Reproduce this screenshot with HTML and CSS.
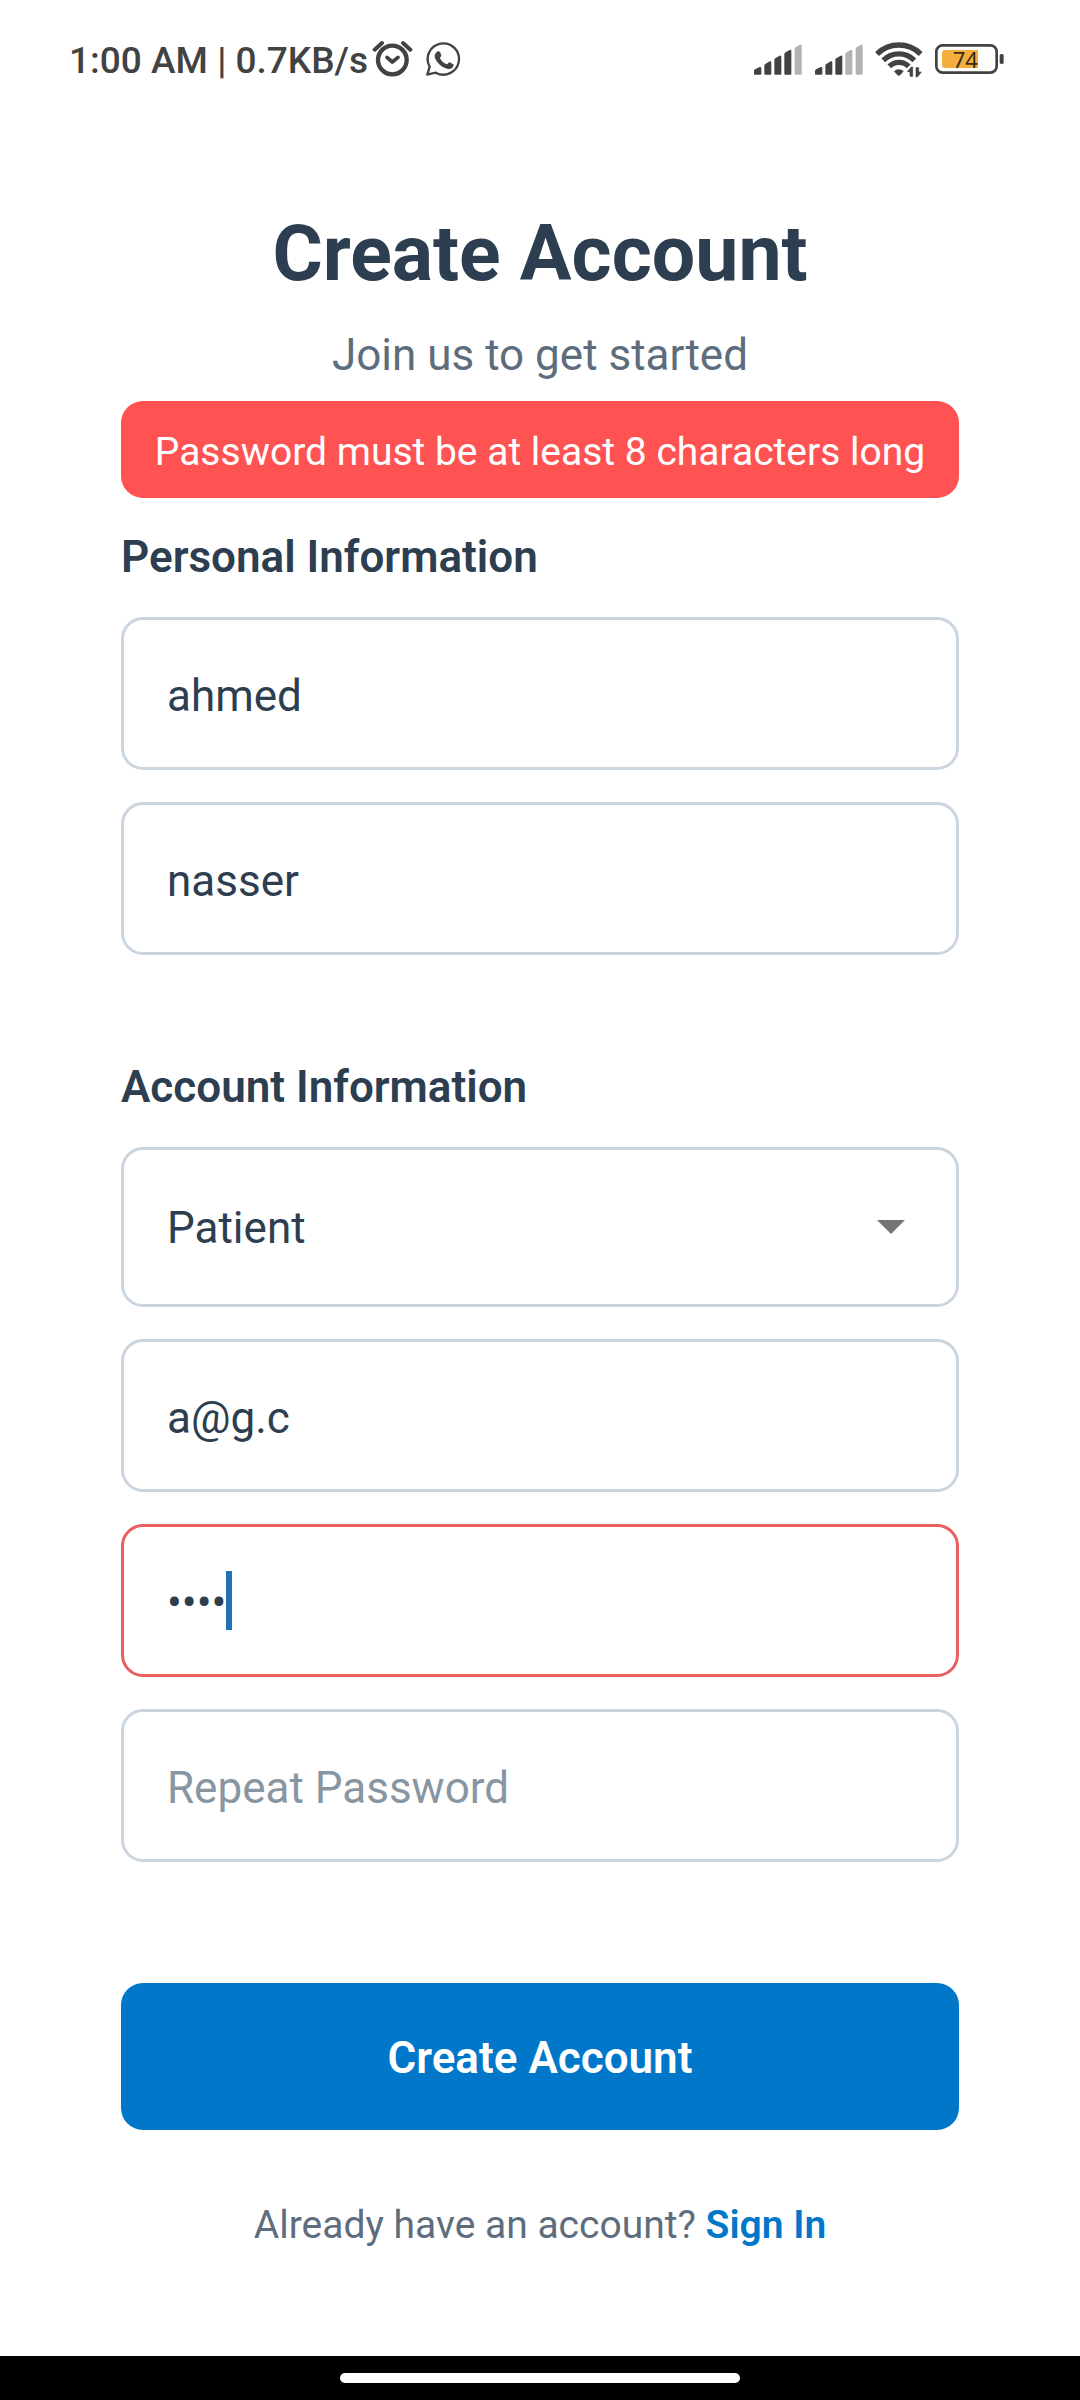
FILE: index.html
```html
<!DOCTYPE html>
<html lang="en">
<head>
  <meta charset="utf-8">
  <meta name="viewport" content="width=device-width, initial-scale=1">
  <title>Create Account</title>
  <link rel="stylesheet" href="styles.css">
</head>
<body>
  <div class="screen">
    <header class="status">
      <div class="status-left">
        <span class="status-text">1:00 AM | 0.7KB/s</span>
        <svg class="icon-alarm" viewBox="966 60 123 114" aria-hidden="true">
          <circle cx="1027" cy="120" r="43" fill="none" stroke="#424242" stroke-width="13"/>
          <path d="M974 89l22-20M1081 89l-22-20" fill="none" stroke="#424242" stroke-width="12" stroke-linecap="round"/>
          <path d="M1011 112l16 14 17-14" fill="none" stroke="#424242" stroke-width="11" stroke-linecap="round" stroke-linejoin="round"/>
        </svg>
        <svg class="icon-chat" viewBox="1128 60 108 114" aria-hidden="true">
          <path d="M1135 164l7-24a47 47 0 1 1 18 18z" fill="none" stroke="#424242" stroke-width="7" stroke-linejoin="round"/>
          <path d="M1164 95c3-2 7-2 9 1l4 10c1 3-5 7-4 9 5 9 11 14 20 18 3 1 6-7 9-6l11 6c2 2 0 8-3 10-6 5-13 5-20 2-15-6-24-15-31-28-4-8-2-17 5-22z" fill="#424242"/>
        </svg>
      </div>
      <div class="status-right">
        <svg class="icon-signal" viewBox="67 69 150 99" aria-hidden="true">
          <g fill="#424242">
            <path d="M70 153q0-3 3-5l14-7q5-1 5 4v16q0 3-3 3H73q-3 0-3-3z"/>
            <path d="M101 137q0-4 4-6l12-7q5-2 5 3v34q0 3-3 3h-15q-3 0-3-3z"/>
            <path d="M131 120q0-4 4-6l12-7q5-2 5 3v51q0 3-3 3h-15q-3 0-3-3z"/>
            <path d="M161 103q0-4 4-6l12-7q5-2 5 3v68q0 3-3 3h-15q-3 0-3-3z"/>
          </g>
          <path d="M192 87q0-4 4-6l12-7q5-2 5 3v84q0 3-3 3h-15q-3 0-3-3z" fill="#b3b3b3"/>
        </svg>
        <svg class="icon-signal" viewBox="67 69 150 99" aria-hidden="true">
          <g fill="#424242">
            <path d="M70 153q0-3 3-5l14-7q5-1 5 4v16q0 3-3 3H73q-3 0-3-3z"/>
            <path d="M101 137q0-4 4-6l12-7q5-2 5 3v34q0 3-3 3h-15q-3 0-3-3z"/>
            <path d="M131 120q0-4 4-6l12-7q5-2 5 3v51q0 3-3 3h-15q-3 0-3-3z"/>
          </g>
          <g fill="#b3b3b3">
            <path d="M161 103q0-4 4-6l12-7q5-2 5 3v68q0 3-3 3h-15q-3 0-3-3z"/>
            <path d="M192 87q0-4 4-6l12-7q5-2 5 3v84q0 3-3 3h-15q-3 0-3-3z"/>
          </g>
        </svg>
        <svg class="icon-wifi" viewBox="429 60 144 114" aria-hidden="true">
          <g fill="none" stroke="#424242" stroke-width="16">
            <path d="M435 102a93 93 0 0 1 131 0"/>
            <path d="M454 121a66 66 0 0 1 93 0"/>
            <path d="M472 139a41 41 0 0 1 58 0"/>
          </g>
          <path d="M486 154q14-13 29 0l-10 11q-4 4-9 0z" fill="#424242"/>
          <path d="M526 155l12-14h4v28h-8v-14zM568 156l-12 15h-4v-28h8v13z" fill="#424242" stroke="#424242" stroke-width="2"/>
        </svg>
        <svg class="icon-battery" viewBox="612 60 213 114" role="img" aria-label="Battery 74 percent">
          <rect x="619" y="76" width="181" height="82" rx="19" fill="none" stroke="#424242" stroke-width="8"/>
          <rect x="809" y="102" width="12" height="30" rx="5" fill="#424242"/>
          <path d="M646 90h98v54h-98q-10 0-10-10v-34q0-10 10-10z" fill="#f4ae3d"/>
          <text x="668" y="143" class="battery-text">74</text>
        </svg>
      </div>
    </header>

    <main class="content">
      <h1 class="title">Create Account</h1>
      <p class="subtitle">Join us to get started</p>
      <p class="alert" role="alert">Password must be at least 8 characters long</p>

      <form class="form">
        <section class="group">
          <h2 class="group-title">Personal Information</h2>
          <input class="field" type="text" aria-label="First Name" value="ahmed">
          <input class="field" type="text" aria-label="Last Name" value="nasser">
        </section>

        <section class="group">
          <h2 class="group-title">Account Information</h2>
          <div class="field-wrap">
            <select class="field field-select" aria-label="Account type">
              <option selected>Patient</option>
              <option>Doctor</option>
            </select>
            <svg class="arrow" viewBox="0 0 28 14" aria-hidden="true"><path d="M0 0h28L14 14z" fill="#757575"/></svg>
          </div>
          <input class="field" type="text" inputmode="email" aria-label="Email" value="a@g.c">
          <div class="field-wrap">
            <input class="field field-error" type="password" aria-label="Password" aria-invalid="true" value="1234">
            <span class="caret"></span>
          </div>
          <input class="field" type="password" aria-label="Repeat Password" placeholder="Repeat Password">
        </section>

        <button class="submit" type="submit">Create Account</button>
      </form>

      <p class="signin">Already have an account? <a class="signin-link" href="#">Sign In</a></p>
    </main>

    <footer class="navbar"><span class="nav-pill"></span></footer>
  </div>
</body>
</html>
```

FILE: styles.css
```css
* {
  box-sizing: border-box;
}

body {
  margin: 0;
  background: #fff;
  color: #2c3e50;
  font-family: Roboto, "Liberation Sans", sans-serif;
}

h1, h2, p {
  margin: 0;
}

.screen {
  display: flex;
  flex-direction: column;
  min-height: 100vh;
}

/* Status bar */
.status {
  display: flex;
  justify-content: space-between;
  align-items: center;
  height: 118px;
  padding: 0 75px 0 69px;
}

.status-left,
.status-right {
  display: flex;
  align-items: center;
}

.status-left {
  gap: 4px;
}

.status-right {
  gap: 11px;
}

.status-text {
  padding-top: 3px;
  color: #424242;
  font-size: 37px;
  line-height: 44px;
  font-weight: 500;
  white-space: nowrap;
}

.icon-alarm {
  width: 41px;
  height: 38px;
}

.icon-chat {
  width: 36px;
  height: 38px;
  margin-left: 8px;
}

.icon-signal {
  width: 50px;
  height: 33px;
}

.icon-wifi {
  width: 48px;
  height: 38px;
}

.icon-battery {
  width: 71px;
  height: 38px;
}

.battery-text {
  font-family: "Noto Sans", sans-serif;
  font-size: 66px;
  fill: #3a2c14;
}

/* Page */
.content {
  flex: 1;
  padding: 91px 121px;
}

.title {
  font-size: 77px;
  line-height: 90px;
  font-weight: 700;
  text-align: center;
}

.subtitle {
  margin-top: 30px;
  color: #5d6d7e;
  font-size: 44px;
  line-height: 52px;
  text-align: center;
}

.alert {
  margin-top: 20px;
  padding: 28px 16px 23px;
  border-radius: 22px;
  background: #ff5252;
  color: #fff;
  font-size: 39px;
  line-height: 46px;
  text-align: center;
}

.form {
  display: flex;
  flex-direction: column;
  margin-top: 32px;
}

.group {
  display: flex;
  flex-direction: column;
  gap: 32px;
}

.group + .group {
  margin-top: 105px;
}

.group-title {
  font-size: 44px;
  line-height: 55px;
  font-weight: 600;
}

.field-wrap {
  position: relative;
}

.field {
  display: block;
  width: 100%;
  height: 153px;
  margin: 0;
  padding: 4px 43px 0;
  border: 3px solid #cbd5df;
  border-radius: 22px;
  outline: none;
  background: #fff;
  color: #2c3e50;
  font-family: inherit;
  font-size: 44px;
}

.field::placeholder {
  color: #8896a2;
  opacity: 1;
}

.field-select {
  height: 160px;
  padding: 2px 43px 0;
  appearance: none;
}

.field-error {
  border-color: #e95f5f;
}

.arrow {
  position: absolute;
  right: 54px;
  top: 73px;
  width: 28px;
  height: 14px;
}

.caret {
  position: absolute;
  left: 105px;
  top: 47px;
  width: 6px;
  height: 59px;
  background: #1f72b5;
}

.submit {
  margin-top: 121px;
  padding: 49px 16px 46px;
  border: 0;
  border-radius: 22px;
  background: #0077c8;
  color: #fff;
  font-family: inherit;
  font-size: 44px;
  line-height: 52px;
  font-weight: 600;
}

.signin {
  margin-top: 72px;
  color: #5d6d7e;
  font-size: 39px;
  line-height: 46px;
  text-align: center;
}

.signin-link {
  color: #0077c8;
  font-weight: 600;
  text-decoration: none;
}

/* Gesture bar */
.navbar {
  display: flex;
  justify-content: center;
  align-items: center;
  height: 44px;
  background: #000;
}

.nav-pill {
  width: 37%;
  height: 10px;
  border-radius: 5px;
  background: #fff;
}
```
